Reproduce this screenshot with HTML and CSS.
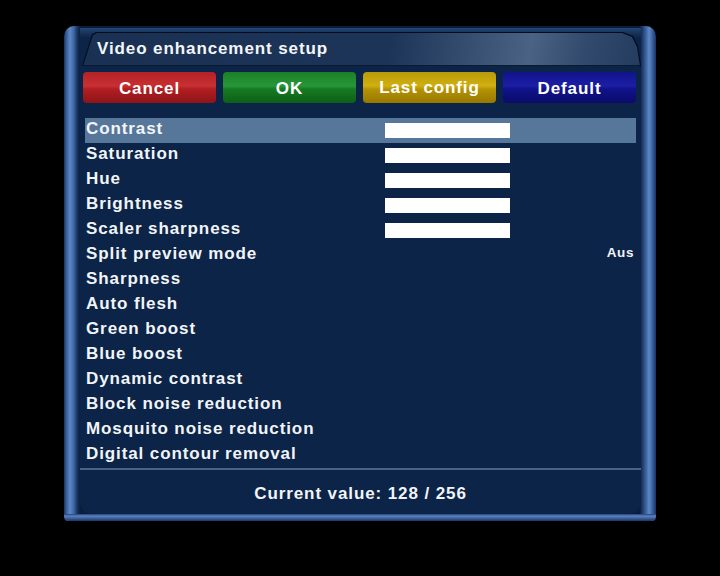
FILE: index.html
```html
<!DOCTYPE html>
<html>
<head>
<meta charset="utf-8">
<link rel="stylesheet" href="styles.css">
</head>
<body>
<div class="frame">
  <div class="panel">
    <div class="title-wrap">
      <div class="title-tab"><div class="title-inner">Video enhancement setup</div></div>
    </div>
    <div class="buttons">
      <div class="btn red">Cancel</div>
      <div class="btn green">OK</div>
      <div class="btn yellow">Last config</div>
      <div class="btn blue">Default</div>
    </div>
    <div class="list">
      <div class="row sel"><span class="label">Contrast</span><span class="bar"></span><span class="val"></span></div>
      <div class="row"><span class="label">Saturation</span><span class="bar"></span><span class="val"></span></div>
      <div class="row"><span class="label">Hue</span><span class="bar"></span><span class="val"></span></div>
      <div class="row"><span class="label">Brightness</span><span class="bar"></span><span class="val"></span></div>
      <div class="row"><span class="label">Scaler sharpness</span><span class="bar"></span><span class="val"></span></div>
      <div class="row"><span class="label">Split preview mode</span><span></span><span class="val">Aus</span></div>
      <div class="row"><span class="label">Sharpness</span><span></span><span class="val"></span></div>
      <div class="row"><span class="label">Auto flesh</span><span></span><span class="val"></span></div>
      <div class="row"><span class="label">Green boost</span><span></span><span class="val"></span></div>
      <div class="row"><span class="label">Blue boost</span><span></span><span class="val"></span></div>
      <div class="row"><span class="label">Dynamic contrast</span><span></span><span class="val"></span></div>
      <div class="row"><span class="label">Block noise reduction</span><span></span><span class="val"></span></div>
      <div class="row"><span class="label">Mosquito noise reduction</span><span></span><span class="val"></span></div>
      <div class="row"><span class="label">Digital contour removal</span><span></span><span class="val"></span></div>
    </div>
    <div class="sep"></div>
    <div class="footer">Current value: 128 / 256</div>
  </div>
  <div class="pipe-bottom"></div>
</div>
</body>
</html>
```
FILE: styles.css
```css
html, body {
  margin: 0;
  padding: 0;
  background: #000;
  width: 720px;
  height: 576px;
  overflow: hidden;
  font-family: "Liberation Sans", Arial, sans-serif;
  font-weight: bold;
  color: #f2f4f8;
  letter-spacing: 0.9px;
}

.frame {
  margin: 26px 0 0 64px;
  width: 592px;
  height: 495px;
  box-sizing: border-box;
  padding: 2px 15px 0 16px;
  display: flex;
  flex-direction: column;
  border-radius: 10px 10px 4px 4px;
  background: linear-gradient(to right,
    #1a3260 0px, #3e66a4 3px, #5d88c2 6px, #3c63a0 10px, #1b3766 13px, #0c1d3a 16px,
    #0c1d3a calc(100% - 16px), #1b3766 calc(100% - 14px), #3c63a0 calc(100% - 10px), #5d88c2 calc(100% - 7px), #3e66a4 calc(100% - 4px), #1a3260 100%);
}

.panel {
  flex: 1;
  background: #0b2447;
  display: flex;
  flex-direction: column;
  border-radius: 0 0 12px 12px;
  overflow: hidden;
}

.pipe-bottom {
  margin: 0 -15px 0 -16px;
  height: 7px;
  border-radius: 0 0 5px 5px;
  background: linear-gradient(to bottom, #20406f 0, #5b84bd 2px, #3f65a2 4px, #1b3563 7px);
}

.title-wrap {
  height: 38px;
  padding-left: 2px;
  background: linear-gradient(to bottom, #244677 0, #162f55 6px, #0b2447 10px);
}

.title-tab {
  height: 38px;
  background: #000d1e;
  clip-path: polygon(0 100%, 10px 6px, 14px 4px, calc(100% - 18px) 4px, calc(100% - 8px) 8px, calc(100% - 3px) 18px, 100% 100%);
  padding: 1px 1px 0 1px;
  box-sizing: border-box;
}

.title-inner {
  height: 37px;
  box-sizing: border-box;
  padding: 4px 0 0 14px;
  display: flex;
  align-items: center;
  font-size: 17px;
  color: #f4f6fa;
  background: linear-gradient(100deg, #1a3154 0%, #1c3457 55%, #4a6384 80%, #31496c 90%, #243c60 100%);
  clip-path: polygon(0 100%, 10px 6px, 14px 4px, calc(100% - 18px) 4px, calc(100% - 8px) 8px, calc(100% - 3px) 18px, 100% 100%);
  border-bottom: 1px solid #0a1a30;
}

.buttons {
  display: flex;
  gap: 7px;
  margin-top: 6px;
  padding-left: 3px;
}

.btn {
  width: 133px;
  height: 31px;
  border-radius: 4px;
  display: flex;
  align-items: center;
  justify-content: center;
  font-size: 17px;
  color: #fff;
  padding-top: 2px;
  box-sizing: border-box;
}

.red { background: linear-gradient(to bottom, #b32226 0%, #c93033 45%, #b01e22 55%, #8f1418 100%); }
.green { background: linear-gradient(to bottom, #1b7f26 0%, #27973a 45%, #167a22 55%, #0e5f18 100%); }
.yellow { background: linear-gradient(to bottom, #b89a0a 0%, #d0b010 45%, #b59306 55%, #967800 100%); padding-top: 0; }
.blue { background: linear-gradient(to bottom, #12138a 0%, #1c1ea6 45%, #10128a 55%, #0a0b6a 100%); }

.list {
  margin: 15px 5px 0 5px;
  display: flex;
  flex-direction: column;
}

.row {
  height: 25px;
  display: grid;
  grid-template-columns: 299px 125px 1fr;
  align-items: center;
  padding: 0 1px 0 1px;
  font-size: 17px;
}

.row.sel { background: #567799; }

.label { line-height: 25px; margin-top: -4px; }

.bar {
  height: 15px;
  background: #fff;
}

.val {
  text-align: right;
  font-size: 13.5px;
  margin-top: -6px;
  letter-spacing: 0.6px;
  margin-right: 1px;
}

.sep {
  height: 2px;
  background: #4a6384;
}

.footer {
  flex: 1;
  display: flex;
  align-items: center;
  justify-content: center;
  font-size: 17px;
  padding-top: 4px;
}
```
